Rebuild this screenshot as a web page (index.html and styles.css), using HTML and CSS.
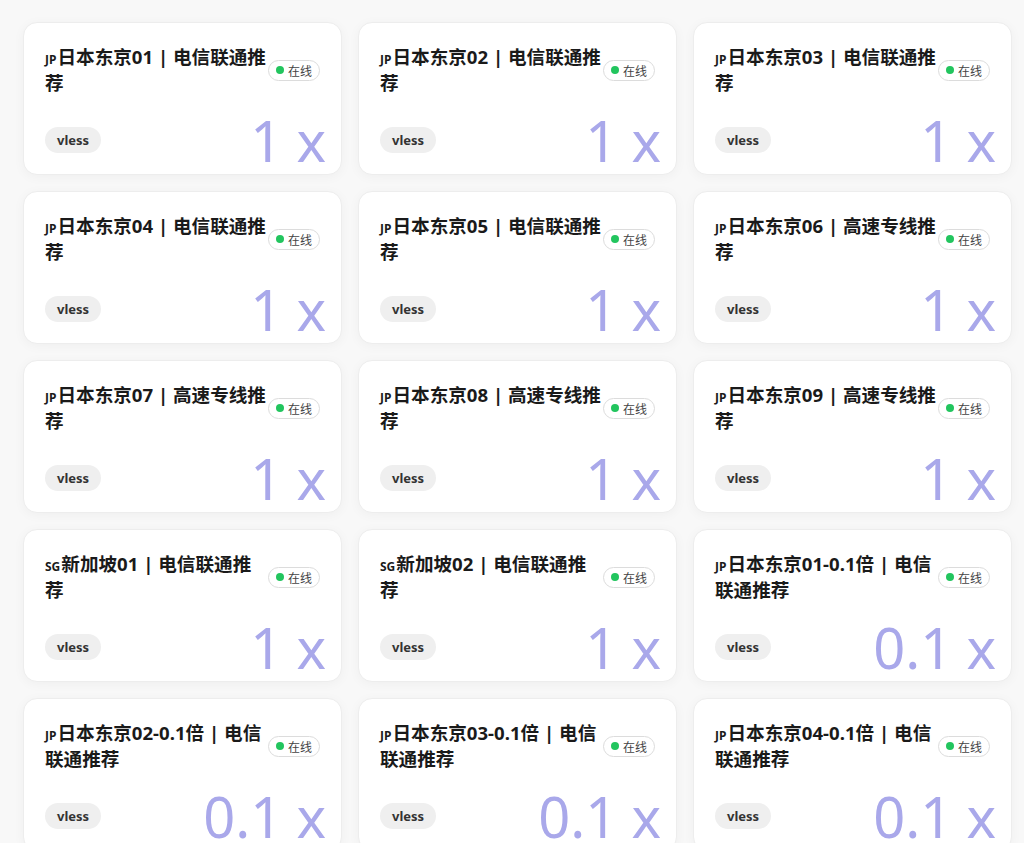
FILE: index.html
```html
<!DOCTYPE html>
<html lang="zh-CN">
<head>
    <meta charset="UTF-8">
    <meta name="viewport" content="width=device-width, initial-scale=1.0">
    <title>节点列表</title>
    <link rel="stylesheet" href="styles.css">
</head>
<body>
    <main class="node-grid" id="nodeGrid"></main>
    <script>
        // Node list data
        const nodes = [
            { flag: 'JP', name: '日本东京01 | 电信联通推荐', rate: '1' },
            { flag: 'JP', name: '日本东京02 | 电信联通推荐', rate: '1' },
            { flag: 'JP', name: '日本东京03 | 电信联通推荐', rate: '1' },
            { flag: 'JP', name: '日本东京04 | 电信联通推荐', rate: '1' },
            { flag: 'JP', name: '日本东京05 | 电信联通推荐', rate: '1' },
            { flag: 'JP', name: '日本东京06 | 高速专线推荐', rate: '1' },
            { flag: 'JP', name: '日本东京07 | 高速专线推荐', rate: '1' },
            { flag: 'JP', name: '日本东京08 | 高速专线推荐', rate: '1' },
            { flag: 'JP', name: '日本东京09 | 高速专线推荐', rate: '1' },
            { flag: 'SG', name: '新加坡01 | 电信联通推荐', rate: '1' },
            { flag: 'SG', name: '新加坡02 | 电信联通推荐', rate: '1' },
            { flag: 'JP', name: '日本东京01-0.1倍 | 电信联通推荐', rate: '0.1' },
            { flag: 'JP', name: '日本东京02-0.1倍 | 电信联通推荐', rate: '0.1' },
            { flag: 'JP', name: '日本东京03-0.1倍 | 电信联通推荐', rate: '0.1' },
            { flag: 'JP', name: '日本东京04-0.1倍 | 电信联通推荐', rate: '0.1' }
        ];

        function renderNodes() {
            const grid = document.getElementById('nodeGrid');
            grid.innerHTML = '';
            nodes.forEach(node => {
                const card = document.createElement('div');
                card.className = 'node-card';
                card.innerHTML = `
                    <div class="node-head">
                        <h3 class="node-name"><span class="flag">${node.flag}</span>${node.name}</h3>
                        <span class="status"><i class="dot"></i>在线</span>
                    </div>
                    <div class="node-foot">
                        <span class="proto">vless</span>
                        <span class="rate">${node.rate}<span class="unit">x</span></span>
                    </div>
                `;
                grid.appendChild(card);
            });
        }

        renderNodes();
    </script>
</body>
</html>
```

FILE: styles.css
```css
body {
    margin: 0;
    padding: 0;
    background: #f8f8f8;
    font-family: 'Noto Sans', 'Noto Sans CJK SC', sans-serif;
    color: #1a1a1a;
}

.node-grid {
    display: grid;
    grid-template-columns: repeat(3, 319px);
    gap: 16px;
    padding: 22px 0 22px 23px;
}

.node-card {
    background: #fff;
    border: 1px solid #ededed;
    border-radius: 14px;
    box-shadow: 0 2px 12px rgba(0, 0, 0, 0.04);
    height: 153px;
    box-sizing: border-box;
    padding: 21px 15px 21px 21px;
    display: flex;
    flex-direction: column;
}

.node-head {
    display: flex;
    align-items: center;
    padding-right: 6px;
}

.node-name {
    flex: 1;
    margin: 0;
    font-family: 'Noto Sans', 'Noto Sans CJK SC', sans-serif;
    font-size: 18.6px;
    font-weight: 700;
    line-height: 26px;
}

.flag {
    font-size: 12px;
    line-height: 1;
    margin-right: 1px;
}

.status {
    display: inline-flex;
    align-items: center;
    gap: 4px;
    height: 21px;
    box-sizing: border-box;
    padding: 0 7px;
    border: 1px solid #dcdcdc;
    border-radius: 11px;
    font-family: 'Noto Sans CJK SC', sans-serif;
    font-size: 12px;
    color: #444;
    white-space: nowrap;
}

.dot {
    width: 8px;
    height: 8px;
    border-radius: 50%;
    background: #22c55e;
}

.node-foot {
    margin-top: auto;
    display: flex;
    justify-content: space-between;
    align-items: flex-end;
}

.proto {
    background: #efefef;
    border-radius: 13px;
    height: 26px;
    line-height: 26px;
    padding: 0 12px;
    font-size: 13px;
    font-weight: 700;
    color: #333;
}

.rate {
    font-size: 56px;
    font-weight: 400;
    line-height: 44px;
    margin-bottom: -9px;
    color: #a9a8ea;
}

.unit {
    margin-left: 14px;
}
```
